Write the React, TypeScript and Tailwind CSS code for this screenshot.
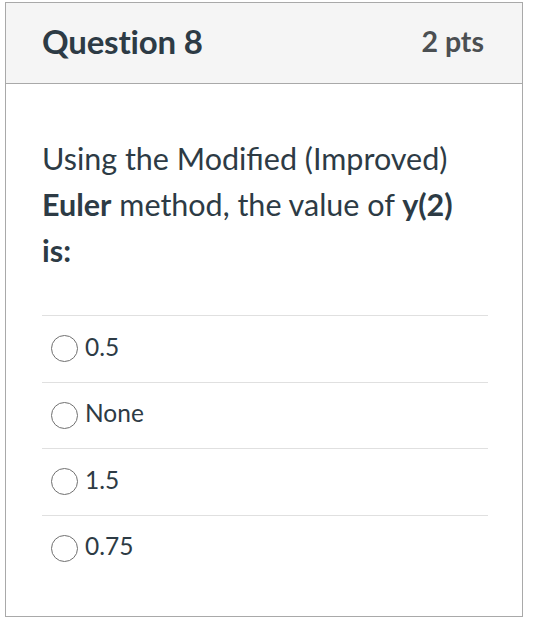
const options = ['0.5', 'None', '1.5', '0.75'];

export default function App() {
  return (
    <div className="min-h-[624px] bg-white pl-[5px] pt-[2px] font-['Lato','Liberation_Sans',sans-serif] text-[#2d3b45]">
      <div className="flex h-[615px] w-[518px] flex-col border border-[#a9a9a9]">
        {/* header */}
        <div className="flex h-[81px] items-center justify-between border-b border-[#a9a9a9] bg-[#f5f5f5] pb-[3px] pl-[36px] pr-[38px]">
          <h2 className="text-[33px] font-bold leading-none tracking-[-0.2px]">Question 8</h2>
          <span className="text-[28.5px] font-bold leading-none text-[#4b4f52]">2 pts</span>
        </div>

        {/* body */}
        <div className="pl-[36px] pr-[34px] pt-[51px]">
          <p className="max-w-[430px] text-[30.5px] leading-[46px]">
            Using the Modified (Improved) <strong className="font-bold">Euler</strong> method, the value of{' '}
            <strong className="font-bold">y(2)</strong> <strong className="font-bold">is:</strong>
          </p>

          <div className="mt-[42px]">
            {options.map((o) => (
              <label
                key={o}
                className="flex h-[66.5px] items-center gap-[7px] border-t border-[#e0e0e0] pl-[9px]"
              >
                <span className="h-[27px] w-[27px] shrink-0 rounded-full border-[1.5px] border-[#707070] bg-white" />
                <span className="pb-[4px] text-[24.5px] leading-none">{o}</span>
              </label>
            ))}
          </div>
        </div>
      </div>
    </div>
  );
}
